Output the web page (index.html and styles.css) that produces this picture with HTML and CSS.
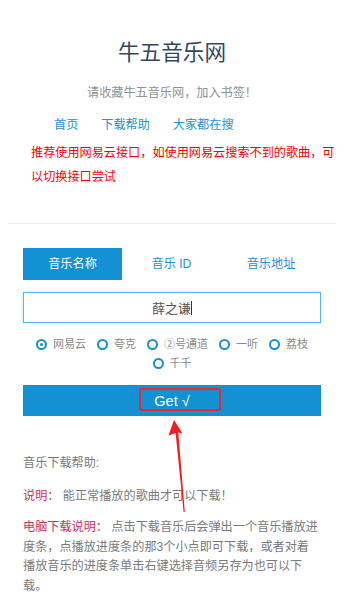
FILE: index.html
```html
<!DOCTYPE html>
<html lang="zh">
<head>
<meta charset="utf-8">
<title>牛五音乐网</title>
<link rel="stylesheet" href="styles.css">
</head>
<body>
<div class="page">
  <header class="header">
    <h1 class="title">牛五音乐网</h1>
    <p class="subtitle">请收藏牛五音乐网，加入书签！</p>
  </header>
  <nav class="nav">
    <a href="#">首页</a>
    <a href="#">下载帮助</a>
    <a href="#">大家都在搜</a>
  </nav>
  <p class="notice">推荐使用网易云接口，如使用网易云搜索不到的歌曲，可以切换接口尝试</p>
  <hr class="rule">
  <section class="form">
    <div class="tabs">
      <div class="tab active">音乐名称</div>
      <div class="tab">音乐 ID</div>
      <div class="tab">音乐地址</div>
    </div>
    <div class="input"><span class="value">薛之谦</span><span class="caret"></span></div>
    <div class="radios">
      <label class="radio"><span class="dot checked"></span>网易云</label>
      <label class="radio"><span class="dot"></span>夸克</label>
      <label class="radio"><span class="dot"></span>②号通道</label>
      <label class="radio"><span class="dot"></span>一听</label>
      <label class="radio"><span class="dot"></span>荔枝</label>
      <label class="radio"><span class="dot"></span>千千</label>
    </div>
    <div class="button-wrap">
      <button class="get">Get √</button>
      <span class="highlight"></span>
      <svg class="arrow" width="30" height="100" viewBox="160 418 30 100" xmlns="http://www.w3.org/2000/svg">
        <polygon points="174,421 182.5,434.5 178.3,433.5 184.8,513 183.6,513 175.6,434 168.5,436.5" fill="#f41d1d"/>
      </svg>
    </div>
    <div class="help">
      <p class="help-title">音乐下载帮助:</p>
      <p class="help-line first"><span class="label">说明：</span> 能正常播放的歌曲才可以下载！</p>
      <p class="help-line second"><span class="label">电脑下载说明：</span> 点击下载音乐后会弹出一个音乐播放进度条，点播放进度条的那3个小点即可下载，或者对着播放音乐的进度条单击右键选择音频另存为也可以下载。</p>
    </div>
  </section>
</div>
</body>
</html>
```

FILE: styles.css
```css
html, body {
  margin: 0;
  padding: 0;
  background: #fff;
}
body {
  font-family: "Liberation Sans", "Noto Sans CJK SC", sans-serif;
  width: 344px;
  overflow: hidden;
}
.page {
  padding: 0 8px;
}
.header {
  text-align: center;
  padding-top: 39px;
}
.title {
  margin: 0;
  font-weight: normal;
  font-size: 21.6px;
  line-height: 28px;
  color: #34495e;
}
.subtitle {
  margin: 16px 0 0;
  font-size: 12.15px;
  line-height: 20px;
  color: #8a9395;
}
.nav {
  display: flex;
  gap: 23px;
  padding-left: 46px;
  margin-top: 12px;
  line-height: 20px;
}
.nav a {
  font-size: 12.15px;
  color: #2490d4;
  text-decoration: none;
}
.notice {
  margin: 6px 0 0;
  padding-left: 23px;
  font-size: 12.15px;
  line-height: 24px;
  color: #ff0000;
}
.rule {
  margin: 34px 0 0;
  border: 0;
  height: 1px;
  background: #ececec;
}
.form {
  padding: 0 15px;
}
.tabs {
  display: grid;
  grid-template-columns: 99px 99px 100px;
  margin-top: 24px;
}
.tab {
  height: 32px;
  line-height: 32px;
  text-align: center;
  font-size: 12.15px;
  color: #1e8fd4;
}
.tab.active {
  background: #1391d3;
  color: #fff;
}
.input {
  margin-top: 12px;
  height: 29px;
  border: 1px solid #55b9f0;
  box-shadow: 0 0 2px rgba(85, 185, 240, 0.5);
  display: flex;
  align-items: center;
  justify-content: center;
  font-size: 13px;
  color: #555;
}
.caret {
  display: inline-block;
  width: 1px;
  height: 14px;
  background: #333;
}
.radios {
  margin-top: 12px;
  display: flex;
  flex-wrap: wrap;
  justify-content: center;
  column-gap: 11px;
  line-height: 19px;
  font-size: 11px;
  color: #8a8a8a;
}
.radio {
  display: flex;
  align-items: center;
  gap: 6px;
}
.dot {
  box-sizing: border-box;
  width: 11px;
  height: 11px;
  border: 2px solid #1a8fd5;
  border-radius: 50%;
  display: flex;
  align-items: center;
  justify-content: center;
}
.dot.checked::after {
  content: "";
  width: 3px;
  height: 3px;
  border-radius: 50%;
  background: #1a8fd5;
}
.button-wrap {
  position: relative;
  margin-top: 12px;
}
.get {
  display: block;
  width: 100%;
  height: 31px;
  border: 0;
  margin: 0;
  padding: 0;
  background: #1391d3;
  color: #fff;
  font-family: "Liberation Sans", "Noto Sans CJK SC", sans-serif;
  font-size: 14.5px;
}
.highlight {
  position: absolute;
  left: 116px;
  top: 3px;
  width: 78px;
  height: 19px;
  border: 2px solid #f2262a;
  border-radius: 3px;
}
.arrow {
  position: absolute;
  left: 137px;
  top: 32px;
  overflow: visible;
}
.help {
  margin-top: 37px;
  font-size: 12.15px;
  line-height: 20px;
  color: #7a7a7a;
}
.help p {
  margin: 0;
}
.help .first {
  margin-top: 13px;
}
.help .second {
  margin-top: 12px;
  line-height: 19.7px;
}
.label {
  color: #d12e57;
}
```
